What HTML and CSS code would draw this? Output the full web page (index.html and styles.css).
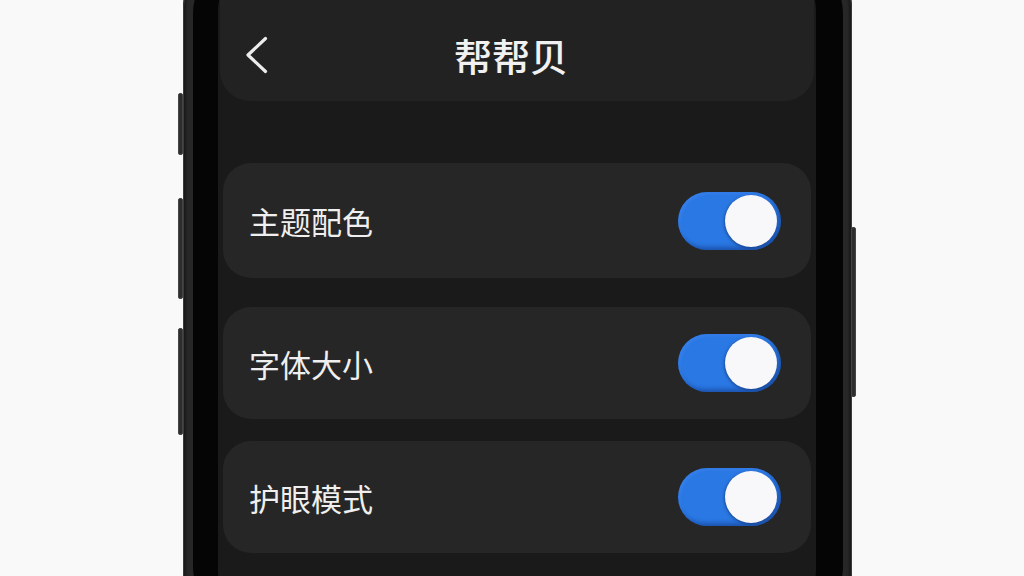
FILE: index.html
```html
<!DOCTYPE html>
<html lang="zh-CN">
<head>
<meta charset="utf-8">
<title>帮帮贝</title>
<link rel="stylesheet" href="styles.css">
</head>
<body>
<div class="stage">
  <div class="phone">
    <span class="btn btn-l1"></span>
    <span class="btn btn-l2"></span>
    <span class="btn btn-l3"></span>
    <span class="btn btn-r1"></span>
    <div class="bezel">
      <div class="screen">
        <header class="topbar">
          <a class="back" aria-label="返回">
            <svg width="24" height="38" viewBox="0 0 24 38"><polyline points="20.5,2.5 3,19 20.5,35.5" fill="none" stroke="#ececec" stroke-width="3.2" stroke-linecap="round" stroke-linejoin="round"/></svg>
          </a>
          <h1 class="title">帮帮贝</h1>
          <span class="spacer"></span>
        </header>
        <section class="settings">
          <div class="card card-1">
            <span class="label">主题配色</span>
            <span class="toggle on"><span class="knob"></span></span>
          </div>
          <div class="card card-2">
            <span class="label">字体大小</span>
            <span class="toggle on"><span class="knob"></span></span>
          </div>
          <div class="card card-3">
            <span class="label">护眼模式</span>
            <span class="toggle on"><span class="knob"></span></span>
          </div>
        </section>
      </div>
    </div>
  </div>
</div>
</body>
</html>
```

FILE: styles.css
```css
html, body {
  margin: 0;
  padding: 0;
  background: #f9f9f9;
  overflow: hidden;
  height: 576px;
}

body {
  font-family: "Noto Sans CJK SC", "Noto Sans", sans-serif;
}

.stage {
  display: flex;
  height: 576px;
  overflow: hidden;
  padding-left: 183px;
}

.phone {
  position: relative;
  flex: none;
  width: 669px;
  height: 700px;
  margin-top: -60px;
  box-sizing: border-box;
  padding: 14px 9px 14px 10px;
  background: #272727;
  border-radius: 70px;
  box-shadow: inset 1px 0 0 #3c3c3c, inset -1px 0 0 #3c3c3c, inset 3px 0 2px #1a1a1a, inset -3px 0 2px #1a1a1a;
}

.btn {
  position: absolute;
  width: 5px;
  background: #2e2e2e;
  border: 1px solid #454545;
  box-sizing: border-box;
  border-radius: 2px;
}
.btn-l1 { left: -5px; top: 153px; height: 62px; }
.btn-l2 { left: -5px; top: 258px; height: 101px; }
.btn-l3 { left: -5px; top: 388px; height: 107px; }
.btn-r1 { right: -4px; top: 287px; height: 170px; }

.bezel {
  height: 100%;
  box-sizing: border-box;
  padding: 12px 27px 12px 25px;
  background: #050505;
  border-radius: 60px;
}

.screen {
  height: 100%;
  box-sizing: border-box;
  padding: 0 2px;
  background: #1a1a1a;
  border-radius: 44px;
  overflow: hidden;
}

.topbar {
  display: grid;
  grid-template-columns: 1fr auto 1fr;
  align-items: center;
  height: 141px;
  box-sizing: border-box;
  padding: 49px 25px 0 25px;
  margin-top: -6px;
  background: #222222;
  border-radius: 30px;
}

.back {
  display: flex;
  align-items: center;
  width: 24px;
  height: 38px;
}

.title {
  margin: 0 12px 0 0;
  font-size: 38px;
  font-weight: 500;
  color: #f1f1f1;
  line-height: 1;
}

.settings {
  display: flex;
  flex-direction: column;
  padding: 0 3px;
}

.card {
  display: flex;
  align-items: center;
  justify-content: space-between;
  box-sizing: border-box;
  padding: 0 30px 0 26px;
  background: #262626;
  border-radius: 28px;
}

.card-1 { margin-top: 62px; height: 115px; }
.card-2 { margin-top: 29px; height: 112px; }
.card-3 { margin-top: 22px; height: 112px; }

.label {
  font-size: 31px;
  font-weight: 400;
  color: #efefef;
  line-height: 1;
}

.toggle {
  position: relative;
  display: block;
  width: 103px;
  height: 58px;
  border-radius: 29px;
  background: #2a78e4;
  box-shadow: inset -3px -3px 4px rgba(10, 40, 110, 0.45), inset 2px 2px 3px rgba(90, 150, 255, 0.25);
}

.knob {
  position: absolute;
  top: 3px;
  right: 4px;
  width: 52px;
  height: 52px;
  border-radius: 50%;
  background: #f8f8fa;
  box-shadow: -1px 1px 3px rgba(0, 0, 30, 0.35);
}
```
